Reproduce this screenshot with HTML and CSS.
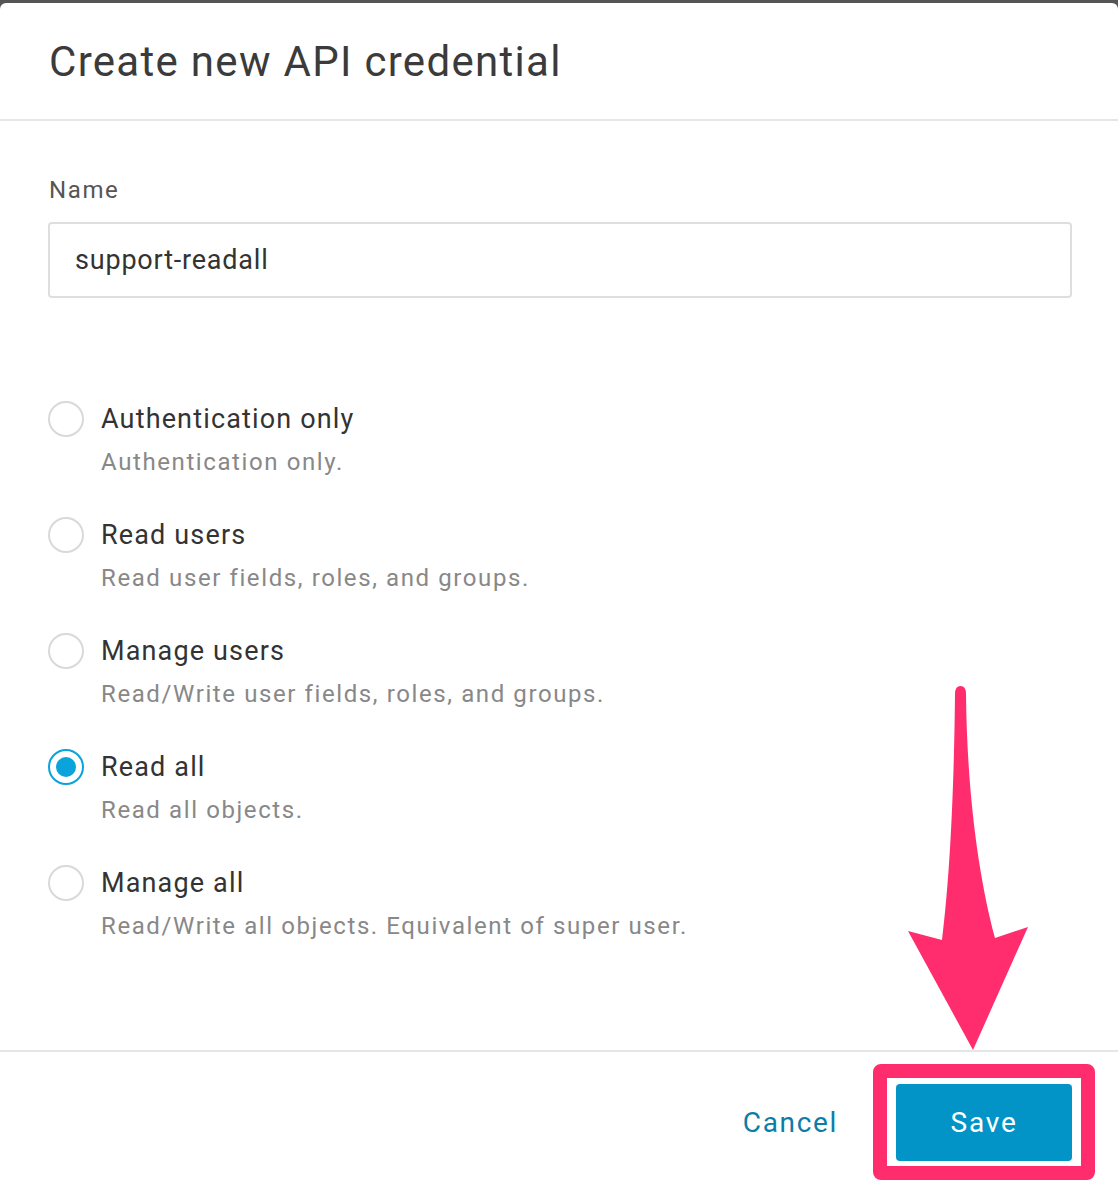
FILE: index.html
```html
<!DOCTYPE html>
<html lang="en">
<head>
<meta charset="utf-8">
<title>Create new API credential</title>
<link rel="stylesheet" href="styles.css">
</head>
<body>
<div class="dialog">
  <header class="dialog-header">
    <h1 class="title">Create new API credential</h1>
  </header>
  <main class="dialog-body">
    <label class="field-label" for="name">Name</label>
    <div class="input">support-readall</div>
    <ul class="options">
      <li class="option">
        <span class="radio"></span>
        <div class="option-text">
          <div class="option-title">Authentication only</div>
          <div class="option-desc">Authentication only.</div>
        </div>
      </li>
      <li class="option">
        <span class="radio"></span>
        <div class="option-text">
          <div class="option-title">Read users</div>
          <div class="option-desc">Read user fields, roles, and groups.</div>
        </div>
      </li>
      <li class="option">
        <span class="radio"></span>
        <div class="option-text">
          <div class="option-title">Manage users</div>
          <div class="option-desc">Read/Write user fields, roles, and groups.</div>
        </div>
      </li>
      <li class="option">
        <span class="radio checked"></span>
        <div class="option-text">
          <div class="option-title">Read all</div>
          <div class="option-desc">Read all objects.</div>
        </div>
      </li>
      <li class="option">
        <span class="radio"></span>
        <div class="option-text">
          <div class="option-title">Manage all</div>
          <div class="option-desc">Read/Write all objects. Equivalent of super user.</div>
        </div>
      </li>
    </ul>
  </main>
  <footer class="dialog-footer">
    <button class="btn-cancel">Cancel</button>
    <div class="highlight">
      <button class="btn-save">Save</button>
    </div>
  </footer>
  <svg class="arrow" width="1118" height="1192" viewBox="0 0 1118 1192">
    <path d="M955,694 Q955,686 960.5,686 Q966,686 966,694 C967,790 978,875 995,938 L1028,927 L973,1050 L908,931 L942,940 C950,875 954,790 955,694 Z" fill="#ff2d6e"/>
  </svg>
</div>
</body>
</html>
```

FILE: styles.css
```css
* { box-sizing: border-box; }
html, body {
  margin: 0;
  padding: 0;
  background: #545554;
}
body {
  font-family: Roboto, "Noto Sans", Arial, sans-serif;
  width: 1118px;
  height: 1192px;
  overflow: hidden;
}
.dialog {
  position: relative;
  margin-top: 3px;
  height: 1189px;
  background: #ffffff;
  border-radius: 6px 6px 0 0;
  display: flex;
  flex-direction: column;
}
.dialog-header {
  height: 118px;
  border-bottom: 2px solid #e6e6e6;
  padding: 0 49px;
  display: flex;
  align-items: center;
}
.title {
  margin: 0;
  font-size: 42px;
  font-weight: 400;
  color: #3b3b3b;
  letter-spacing: 1.3px;
}
.dialog-body {
  flex: 1;
  padding: 56px 46px 0 48px;
}
.field-label {
  display: block;
  font-size: 24px;
  color: #555555;
  letter-spacing: 1.6px;
  line-height: 26px;
  margin-left: 1px;
}
.input {
  margin-top: 19px;
  height: 76px;
  border: 2px solid #dedede;
  border-radius: 4px;
  padding: 0 25px;
  display: flex;
  align-items: center;
  font-size: 27px;
  color: #333333;
  letter-spacing: 0.8px;
}
.options {
  list-style: none;
  margin: 103px 0 0 0;
  padding: 0;
}
.option {
  display: flex;
  align-items: flex-start;
  height: 116px;
}
.radio {
  flex: none;
  width: 36px;
  height: 36px;
  border: 2px solid #d9d9d9;
  border-radius: 50%;
  margin-top: 0;
  display: flex;
  align-items: center;
  justify-content: center;
}
.radio.checked {
  border-color: #0aa3dc;
}
.radio.checked::after {
  content: "";
  width: 20px;
  height: 20px;
  border-radius: 50%;
  background: #0aa3dc;
}
.option-text {
  margin-left: 17px;
}
.option-title {
  font-size: 27px;
  line-height: 36px;
  color: #333333;
  letter-spacing: 1.15px;
}
.option-desc {
  margin-top: 11px;
  font-size: 24px;
  line-height: 28px;
  color: #888888;
  letter-spacing: 1.6px;
}
.dialog-footer {
  height: 142px;
  border-top: 2px solid #e6e6e6;
  display: flex;
  align-items: center;
  justify-content: flex-end;
  padding-right: 23px;
}
.btn-cancel {
  background: none;
  border: none;
  font-family: inherit;
  font-size: 28px;
  color: #0a7ea8;
  letter-spacing: 1.65px;
  padding: 0;
  margin-right: 35px;
  margin-top: 0;
}
.highlight {
  border: 14px solid #ff2d6e;
  border-radius: 8px;
  padding: 6px 9px 5px 9px;
}
.btn-save {
  display: block;
  width: 176px;
  height: 77px;
  background: #0394c7;
  border: none;
  border-radius: 4px;
  color: #ffffff;
  font-family: inherit;
  font-size: 28px;
  letter-spacing: 1.8px;
}
.arrow {
  position: absolute;
  left: 0;
  top: -3px;
  pointer-events: none;
}
```
